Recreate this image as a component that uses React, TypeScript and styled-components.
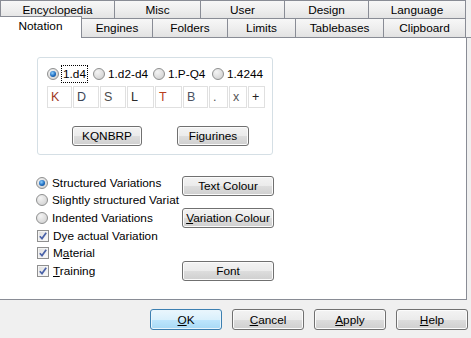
import React from "react";
import styled, { createGlobalStyle, css } from "styled-components";

const Global = createGlobalStyle`
  html, body { margin: 0; padding: 0; }
  body {
    background: #f0f0f0;
    font-family: "Liberation Sans", Arial, sans-serif;
    font-size: 11.8px;
    color: #000;
  }
`;

const Dialog = styled.div`
  width: 471px;
  height: 338px;
  display: flex;
  flex-direction: column;
  background: #f0f0f0;
  overflow: hidden;
`;

const TabRow = styled.div`
  display: flex;
  height: 19px;
  align-items: flex-end;
`;

const tabBase = css`
  box-sizing: border-box;
  display: flex;
  align-items: center;
  justify-content: center;
  border-top: 1px solid #898c95;
  border-right: 1px solid #898c95;
  background: linear-gradient(#f7f7f7, #eeeeee 50%, #e2e2e2);
  white-space: nowrap;
`;

const TopTab = styled.div<{ $w: number; $first?: boolean }>`
  ${tabBase};
  width: ${(p) => p.$w}px;
  height: 19px;
  ${(p) => p.$first && "border-left: 1px solid #898c95;"}
`;

const BottomTab = styled.div<{ $w: number; $active?: boolean }>`
  ${tabBase};
  width: ${(p) => p.$w}px;
  height: 20px;
  border-bottom: 1px solid #898c95;
  ${(p) =>
    p.$active &&
    css`
      background: #fff;
      height: 22px;
      margin-top: -2px;
      border-bottom: none;
      padding-bottom: 3px;
    `}
`;

const TabFill = styled.div`
  flex: 1;
  height: 20px;
  box-sizing: border-box;
  border-bottom: 1px solid #898c95;
`;

const Panel = styled.div`
  box-sizing: border-box;
  width: 467px;
  height: 262px;
  background: #fff;
  border-right: 1px solid #898c95;
  border-bottom: 1px solid #898c95;
  padding: 19px 0 0 37px;
  display: flex;
  flex-direction: column;
`;

const Group = styled.div`
  box-sizing: border-box;
  width: 236px;
  height: 98px;
  border: 1px solid #d5dfe5;
  border-radius: 3px;
  padding: 8px 0 0 9px;
  display: flex;
  flex-direction: column;
`;

const RadioLine = styled.div`
  display: flex;
  align-items: center;
  height: 16px;
  white-space: nowrap;
`;

const RadioItem = styled.label<{ $w?: number }>`
  display: flex;
  align-items: center;
  flex: none;
  gap: 3px;
  width: ${(p) => (p.$w ? `${p.$w}px` : "auto")};
`;

const RadioDot = styled.span<{ $on?: boolean }>`
  box-sizing: border-box;
  width: 12px;
  height: 12px;
  border-radius: 50%;
  border: 1px solid #8e8f8f;
  background: radial-gradient(circle at 35% 30%, #f4f4f4, #d8d8d8 70%, #c8c8c8);
  display: flex;
  align-items: center;
  justify-content: center;
  flex: none;
  &::after {
    content: "";
    display: ${(p) => (p.$on ? "block" : "none")};
    width: 6px;
    height: 6px;
    border-radius: 50%;
    background: radial-gradient(circle at 40% 35%, #8fd0ff, #1c6cc0 55%, #0b3e7a);
  }
`;

const Focus = styled.span`
  outline: 1px dotted #000;
  outline-offset: 0;
  padding: 1px 1px;
`;

const LetterRow = styled.div`
  display: flex;
  gap: 1px;
  margin-top: 4px;
  height: 22px;
`;

const LetterBox = styled.div<{ $w: number; $c: string }>`
  box-sizing: border-box;
  width: ${(p) => p.$w}px;
  height: 22px;
  border: 1px solid #e0e0e0;
  padding: 3px 0 0 3px;
  font-family: "Liberation Sans", Arial, sans-serif;
  font-size: 12.5px;
  color: ${(p) => p.$c};
`;

const PieceButtons = styled.div`
  display: flex;
  gap: 35px;
  margin: 18px 0 0 25px;
`;

const Btn = styled.button<{ $w?: number; $h?: number; $default?: boolean }>`
  box-sizing: border-box;
  width: ${(p) => p.$w ?? 92}px;
  height: ${(p) => p.$h ?? 20}px;
  padding: 0;
  font-family: "Liberation Sans", Arial, sans-serif;
  font-size: 11.8px;
  color: #000;
  white-space: nowrap;
  border: 1px solid #707070;
  border-radius: 3px;
  box-shadow: inset 0 0 0 1px #fbfbfb;
  background: linear-gradient(#f3f3f3, #ebebeb 50%, #dddddd 51%, #cfcfcf);
  ${(p) =>
    p.$default &&
    css`
      border-color: #3c7fb1;
      box-shadow: inset 0 0 0 1px #e8f5fc;
      background: linear-gradient(#eaf6fd, #d9f0fc 50%, #bee6fd 51%, #a7d9f5);
    `}
`;

const Options = styled.div`
  display: grid;
  grid-template-columns: 146px 92px;
  grid-template-rows: repeat(6, 17.6px);
  margin: 19px 0 0 -1px;
`;

const Option = styled.label<{ $row: number }>`
  grid-column: 1;
  grid-row: ${(p) => p.$row};
  display: flex;
  align-items: center;
  gap: 4px;
  white-space: nowrap;
`;

const SideButton = styled(Btn)<{ $row: number; $shift?: number }>`
  grid-column: 2;
  grid-row: ${(p) => p.$row};
  align-self: center;
  position: relative;
  top: ${(p) => p.$shift ?? 0}px;
`;

const CheckBox = styled.span`
  box-sizing: border-box;
  width: 12px;
  height: 12px;
  margin-left: 1px;
  border: 1px solid #8f8f8f;
  background: linear-gradient(135deg, #dcdcdc, #fdfdfd);
  box-shadow: inset 0 0 0 1px #f4f4f4;
  display: flex;
  align-items: center;
  justify-content: center;
  flex: none;
`;

const Footer = styled.div`
  display: flex;
  justify-content: flex-end;
  gap: 10px;
  padding: 9px 3px 0 0;
`;

const U = styled.span`
  text-decoration: underline;
  text-underline-offset: 1px;
`;

const Check = () => (
  <CheckBox>
    <svg width="8" height="8" viewBox="0 0 8 8">
      <path d="M0.8 4.2 L3 6.6 L7.2 0.8" fill="none" stroke="#4a62a8" strokeWidth="1.7" />
    </svg>
  </CheckBox>
);

const letters: [string, number, string][] = [
  ["K", 25, "#a0391c"],
  ["D", 26, "#3c4656"],
  ["S", 26, "#4c4c4c"],
  ["L", 27, "#2a2a2a"],
  ["T", 27, "#b8401e"],
  ["B", 25, "#4c5262"],
  [".", 19, "#555"],
  ["x", 18, "#555"],
  ["+", 17, "#222"],
];

export default function App() {
  return (
    <>
      <Global />
      <Dialog>
        <TabRow>
          <TopTab $w={115} $first>Encyclopedia</TopTab>
          <TopTab $w={86}>Misc</TopTab>
          <TopTab $w={84}>User</TopTab>
          <TopTab $w={84}>Design</TopTab>
          <TopTab $w={97}>Language</TopTab>
        </TabRow>
        <TabRow>
          <BottomTab $w={82} $active>Notation</BottomTab>
          <BottomTab $w={71}>Engines</BottomTab>
          <BottomTab $w={75}>Folders</BottomTab>
          <BottomTab $w={68}>Limits</BottomTab>
          <BottomTab $w={88}>Tablebases</BottomTab>
          <BottomTab $w={82}>Clipboard</BottomTab>
          <TabFill />
        </TabRow>
        <Panel>
          <Group>
            <RadioLine>
              <RadioItem $w={46}>
                <RadioDot $on />
                <Focus>1.d4</Focus>
              </RadioItem>
              <RadioItem $w={60}>
                <RadioDot />
                1.d2-d4
              </RadioItem>
              <RadioItem $w={59}>
                <RadioDot />
                1.P-Q4
              </RadioItem>
              <RadioItem>
                <RadioDot />
                1.4244
              </RadioItem>
            </RadioLine>
            <LetterRow>
              {letters.map(([ch, w, c], i) => (
                <LetterBox key={i} $w={w} $c={c}>
                  {ch}
                </LetterBox>
              ))}
            </LetterRow>
            <PieceButtons>
              <Btn $w={70}>KQNBRP</Btn>
              <Btn $w={72}>Figurines</Btn>
            </PieceButtons>
          </Group>
          <Options>
            <Option $row={1}>
              <RadioDot $on />
              Structured Variations
            </Option>
            <Option $row={2}>
              <RadioDot />
              Slightly structured Variat
            </Option>
            <Option $row={3}>
              <RadioDot />
              Indented Variations
            </Option>
            <Option $row={4}>
              <Check />
              Dye actual Variation
            </Option>
            <Option $row={5}>
              <Check />
              <span>
                M<U>a</U>terial
              </span>
            </Option>
            <Option $row={6}>
              <Check />
              <span>
                <U>T</U>raining
              </span>
            </Option>
            <SideButton $row={1} $shift={3}>Text Colour</SideButton>
            <SideButton $row={3}>
              <U>V</U>ariation Colour
            </SideButton>
            <SideButton $row={6}>Font</SideButton>
          </Options>
        </Panel>
        <Footer>
          <Btn $w={72} $h={21} $default>
            <U>O</U>K
          </Btn>
          <Btn $w={72} $h={21}>
            <U>C</U>ancel
          </Btn>
          <Btn $w={72} $h={21}>
            <U>A</U>pply
          </Btn>
          <Btn $w={72} $h={21}>
            <U>H</U>elp
          </Btn>
        </Footer>
      </Dialog>
    </>
  );
}
